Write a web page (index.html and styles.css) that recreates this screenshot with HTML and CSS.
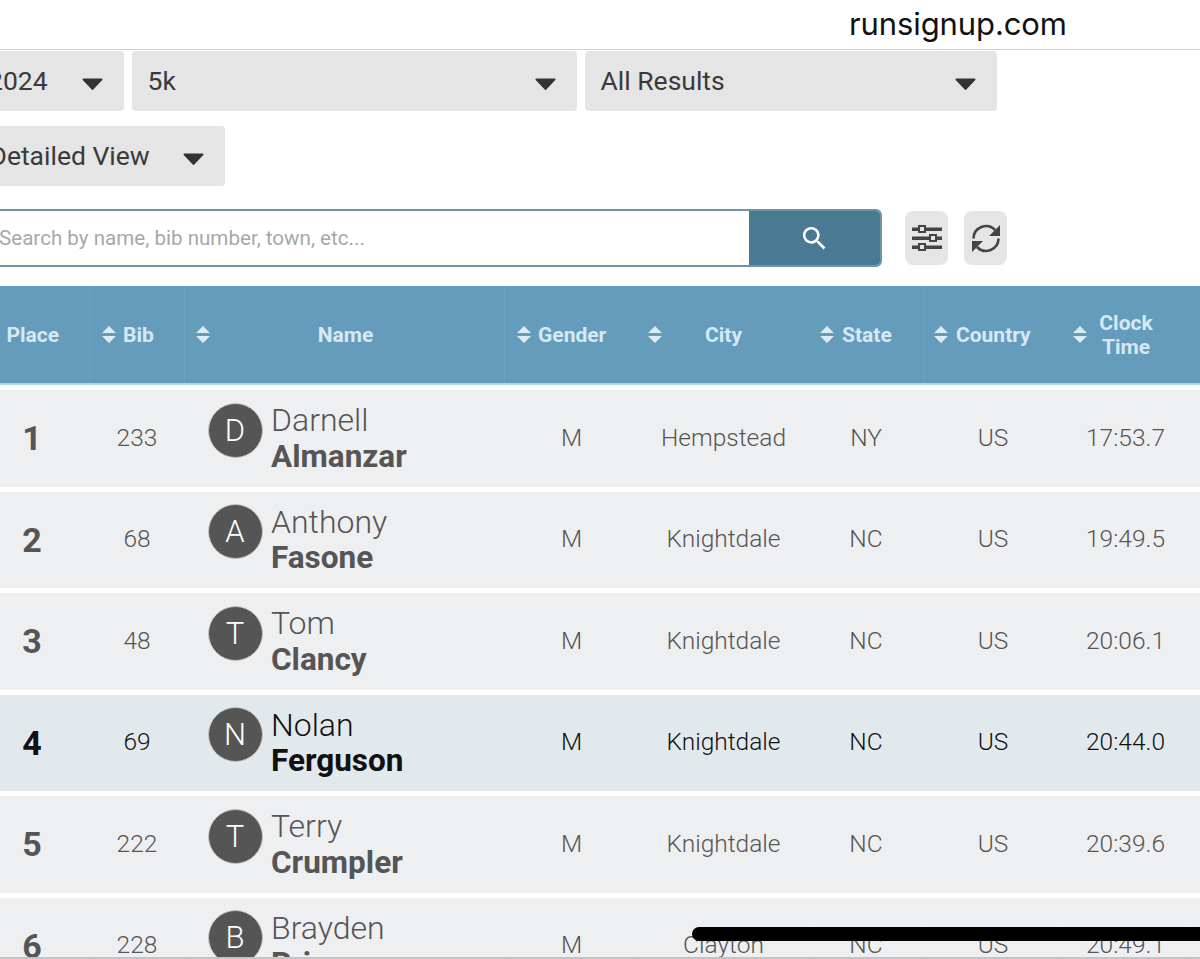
FILE: index.html
```html
<!DOCTYPE html>
<html lang="en">
<head>
    <meta charset="UTF-8">
    <meta name="viewport" content="width=device-width, initial-scale=1.0">
    <title>Race Results</title>
    <link rel="stylesheet" href="styles.css">
</head>
<body>
    <svg class="icon-defs" width="0" height="0">
        <symbol id="caret" viewBox="0 0 21 12"><path d="M1.5 0.5h18a1 1 0 0 1 .8 1.6l-9 9.4a1 1 0 0 1-1.6 0l-9-9.4a1 1 0 0 1 .8-1.6z"/></symbol>
        <symbol id="sort" viewBox="0 0 14 17"><path d="M7 0l7 7H0zM0 10h14l-7 7z"/></symbol>
    </svg>

    <div class="page">
        <!-- Address bar -->
        <div class="url-bar"><span class="url-text">runsignup.com</span></div>

        <!-- Filters -->
        <div class="filters">
            <div class="select select-year"><span>2024</span><svg class="caret"><use href="#caret"/></svg></div>
            <div class="select select-event"><span>5k</span><svg class="caret"><use href="#caret"/></svg></div>
            <div class="select select-results"><span>All Results</span><svg class="caret"><use href="#caret"/></svg></div>
            <div class="select select-view"><span>Detailed View</span><svg class="caret"><use href="#caret"/></svg></div>
        </div>

        <!-- Search -->
        <div class="search-row">
            <div class="search-box">
                <div class="search-input">Search by name, bib number, town, etc...</div>
                <div class="search-btn">
                    <svg width="31" height="31" viewBox="0 0 24 24" fill="#fff"><path d="M15.5 14h-.79l-.28-.27A6.471 6.471 0 0 0 16 9.5 6.5 6.5 0 1 0 9.5 16c1.61 0 3.09-.59 4.23-1.57l.27.28v.79l5 4.99L20.49 19l-4.99-5zm-6 0C7.01 14 5 11.99 5 9.5S7.01 5 9.5 5 14 7.01 14 9.5 11.99 14 9.5 14z"/></svg>
                </div>
            </div>
            <div class="tool-btn">
                <svg width="30" height="26" viewBox="0 0 30 26">
                    <g fill="#444">
                        <rect x="0" y="2.500" width="30" height="3.500"/>
                        <rect x="0" y="11.500" width="30" height="3.500"/>
                        <rect x="0" y="20.500" width="30" height="3.500"/>
                    </g>
                    <g fill="#e5e5e5" stroke="#444" stroke-width="2">
                        <rect x="7" y="1" width="6" height="6"/>
                        <rect x="18" y="10" width="6" height="6"/>
                        <rect x="7" y="19" width="6" height="6"/>
                    </g>
                </svg>
            </div>
            <div class="tool-btn">
                <svg width="30" height="29" viewBox="0 0 30 29">
                    <g fill="none" stroke="#444" stroke-width="2.600">
                        <path d="M2.500 14.500A12.500 12.500 0 0 1 24 6"/>
                        <path d="M27.500 14.500A12.500 12.500 0 0 1 6 23"/>
                    </g>
                    <path fill="#444" d="M29 1v11H18zM1 28V17h11z"/>
                </svg>
            </div>
        </div>

        <!-- Results table -->
        <div class="results">
            <div class="results-head">
                <div class="th th-place"><span>Place</span></div>
                <div class="th line"><svg class="sort"><use href="#sort"/></svg><span>Bib</span></div>
                <div class="th line th-name"><svg class="sort"><use href="#sort"/></svg><span class="th-wide">Name</span></div>
                <div class="th line"><svg class="sort"><use href="#sort"/></svg><span>Gender</span></div>
                <div class="th th-city"><svg class="sort"><use href="#sort"/></svg><span class="th-wide">City</span></div>
                <div class="th th-state"><svg class="sort"><use href="#sort"/></svg><span>State</span></div>
                <div class="th line th-country"><svg class="sort"><use href="#sort"/></svg><span>Country</span></div>
                <div class="th th-clock"><svg class="sort"><use href="#sort"/></svg><span class="th-wide">Clock<br>Time</span></div>
                <div class="th"></div>
            </div>

            <div class="row">
                <div class="td place">1</div><div class="td">233</div>
                <div class="td name"><div class="avatar">D</div><div class="runner">Darnell<b>Almanzar</b></div></div>
                <div class="td">M</div><div class="td">Hempstead</div><div class="td">NY</div><div class="td">US</div><div class="td">17:53.7</div><div class="td"></div>
            </div>
            <div class="row">
                <div class="td place">2</div><div class="td">68</div>
                <div class="td name"><div class="avatar">A</div><div class="runner">Anthony<b>Fasone</b></div></div>
                <div class="td">M</div><div class="td">Knightdale</div><div class="td">NC</div><div class="td">US</div><div class="td">19:49.5</div><div class="td"></div>
            </div>
            <div class="row">
                <div class="td place">3</div><div class="td">48</div>
                <div class="td name"><div class="avatar">T</div><div class="runner">Tom<b>Clancy</b></div></div>
                <div class="td">M</div><div class="td">Knightdale</div><div class="td">NC</div><div class="td">US</div><div class="td">20:06.1</div><div class="td"></div>
            </div>
            <div class="row row-active">
                <div class="td place">4</div><div class="td">69</div>
                <div class="td name"><div class="avatar">N</div><div class="runner">Nolan<b>Ferguson</b></div></div>
                <div class="td">M</div><div class="td">Knightdale</div><div class="td">NC</div><div class="td">US</div><div class="td">20:44.0</div><div class="td"></div>
            </div>
            <div class="row">
                <div class="td place">5</div><div class="td">222</div>
                <div class="td name"><div class="avatar">T</div><div class="runner">Terry<b>Crumpler</b></div></div>
                <div class="td">M</div><div class="td">Knightdale</div><div class="td">NC</div><div class="td">US</div><div class="td">20:39.6</div><div class="td"></div>
            </div>
            <div class="row">
                <div class="td place">6</div><div class="td">228</div>
                <div class="td name"><div class="avatar">B</div><div class="runner">Brayden<b>Price</b></div></div>
                <div class="td">M</div><div class="td">Clayton</div><div class="td">NC</div><div class="td">US</div><div class="td">20:49.1</div><div class="td"></div>
            </div>
        </div>
    </div>

    <!-- Browser chrome lying over the page -->
    <div class="bottom-line"></div>
    <div class="home-bar"></div>
</body>
</html>
```

FILE: styles.css
```css
* {
    margin: 0;
    padding: 0;
    box-sizing: border-box;
}

html, body {
    height: 959px;
    overflow: hidden;
}

body {
    font-family: Roboto, 'Liberation Sans', sans-serif;
    background: #fff;
    color: #555;
    position: relative;
}

.icon-defs {
    position: absolute;
}

.page {
    width: 1200px;
    height: 959px;
    overflow: hidden;
}

.url-bar {
    height: 50px;
    border-bottom: 1px solid #d0d0d0;
    padding-left: 849px;
}

.url-text {
    font-family: Inter, 'Liberation Sans', sans-serif;
    font-size: 31px;
    line-height: 48px;
    color: #111;
    letter-spacing: -0.1px;
}

/* Filters */
.filters {
    display: flex;
    flex-wrap: wrap;
    gap: 15px 8px;
    width: 1100px;
    margin: 1px 0 0 -30px;
}

.select {
    height: 60px;
    background: #e5e5e5;
    border-radius: 4px;
    display: flex;
    align-items: center;
    justify-content: space-between;
    padding: 0 21px 0 15.500px;
    font-size: 26.500px;
    color: #3a3a3a;
}

.select span {
    margin-top: -2px;
}

.select-year { width: 154px; padding-left: 18px; }
.select-event { width: 445px; }
.select-results { width: 412px; }
.select-view { width: 255px; flex-basis: 255px; margin-right: 600px; padding-left: 19.500px; }

.caret {
    width: 21px;
    height: 12px;
    fill: #333;
    margin-top: 6px;
}

/* Search */
.search-row {
    display: flex;
    align-items: center;
    margin: 23px 0 0 -30px;
}

.search-box {
    width: 912px;
    height: 58px;
    display: flex;
    border: 2px solid #6f94a8;
    border-radius: 6px;
    overflow: hidden;
    margin-right: 23px;
}

.search-input {
    flex: 1;
    padding-left: 27px;
    font-size: 20.600px;
    line-height: 55px;
    color: #a8a8a8;
}

.search-btn {
    width: 131px;
    background: #4a7994;
    display: flex;
    align-items: center;
    justify-content: center;
}

.tool-btn {
    width: 43.200px;
    height: 54px;
    background: #e5e5e5;
    border-radius: 8px;
    display: flex;
    align-items: center;
    justify-content: center;
    margin-right: 16px;
}

/* Results table */
.results {
    --cols: 114px 95px 320px 134px 170px 115px 139px 126px 100px;
    width: 1313px;
    margin: 19px 0 0 -25px;
}

.results-head {
    display: grid;
    grid-template-columns: var(--cols);
    height: 99px;
    background: #659cbc;
    border-bottom: 2px solid #a9d9e8;
}

.th {
    display: flex;
    align-items: center;
    gap: 7px;
    padding-left: 12px;
    font-size: 21px;
    font-weight: 700;
    line-height: 24px;
    color: #d6e9f3;
    text-align: center;
}

.th.line {
    border-left: 1px solid #6ea3c2;
}

.th-place {
    justify-content: flex-end;
    padding-right: 30px;
}

.th-name { padding-left: 11px; }
.th-city { padding-left: 10px; }
.th-state { gap: 8px; }
.th-country { padding-left: 10px; gap: 8px; }
.th-clock { padding-left: 11px; }

.th-wide {
    flex: 1;
    padding-right: 30px;
}

.sort {
    width: 14px;
    height: 17px;
    flex: none;
    fill: #dcecf4;
}

.row {
    display: grid;
    grid-template-columns: var(--cols);
    height: 96.500px;
    margin-top: 5px;
    background: #eeeff1;
    font-size: 24.500px;
    font-weight: 300;
}

.td {
    display: flex;
    align-items: center;
    justify-content: center;
    border-left: 1px solid #f0f1f3;
    padding-bottom: 2px;
}

.place {
    font-size: 34px;
    font-weight: 700;
    border-left: 0;
    padding-bottom: 0;
}

.name {
    justify-content: flex-start;
    padding: 0 0 0 22.500px;
    gap: 8.500px;
}

.avatar {
    width: 55px;
    height: 55px;
    flex: none;
    margin-top: -16px;
    border-radius: 50%;
    background: #555;
    border: 1px solid #c8c8c8;
    color: #fff;
    font-size: 31px;
    line-height: 53px;
    text-align: center;
}

.runner {
    font-size: 32px;
    line-height: 36.500px;
    margin-top: 1px;
}

.runner b {
    display: block;
    font-weight: 700;
    font-size: 31.500px;
}

.row-active {
    background: #e2e9ed;
    color: #111;
}

.row-active .td {
    border-left-color: #e2e9ed;
}

/* Browser chrome */
.bottom-line {
    position: absolute;
    left: 0;
    right: 0;
    bottom: 0;
    height: 2px;
    background: #c4c4c4;
}

.home-bar {
    position: absolute;
    left: 692px;
    top: 927px;
    width: 560px;
    height: 14px;
    background: #000;
    border-radius: 7px;
}
```
